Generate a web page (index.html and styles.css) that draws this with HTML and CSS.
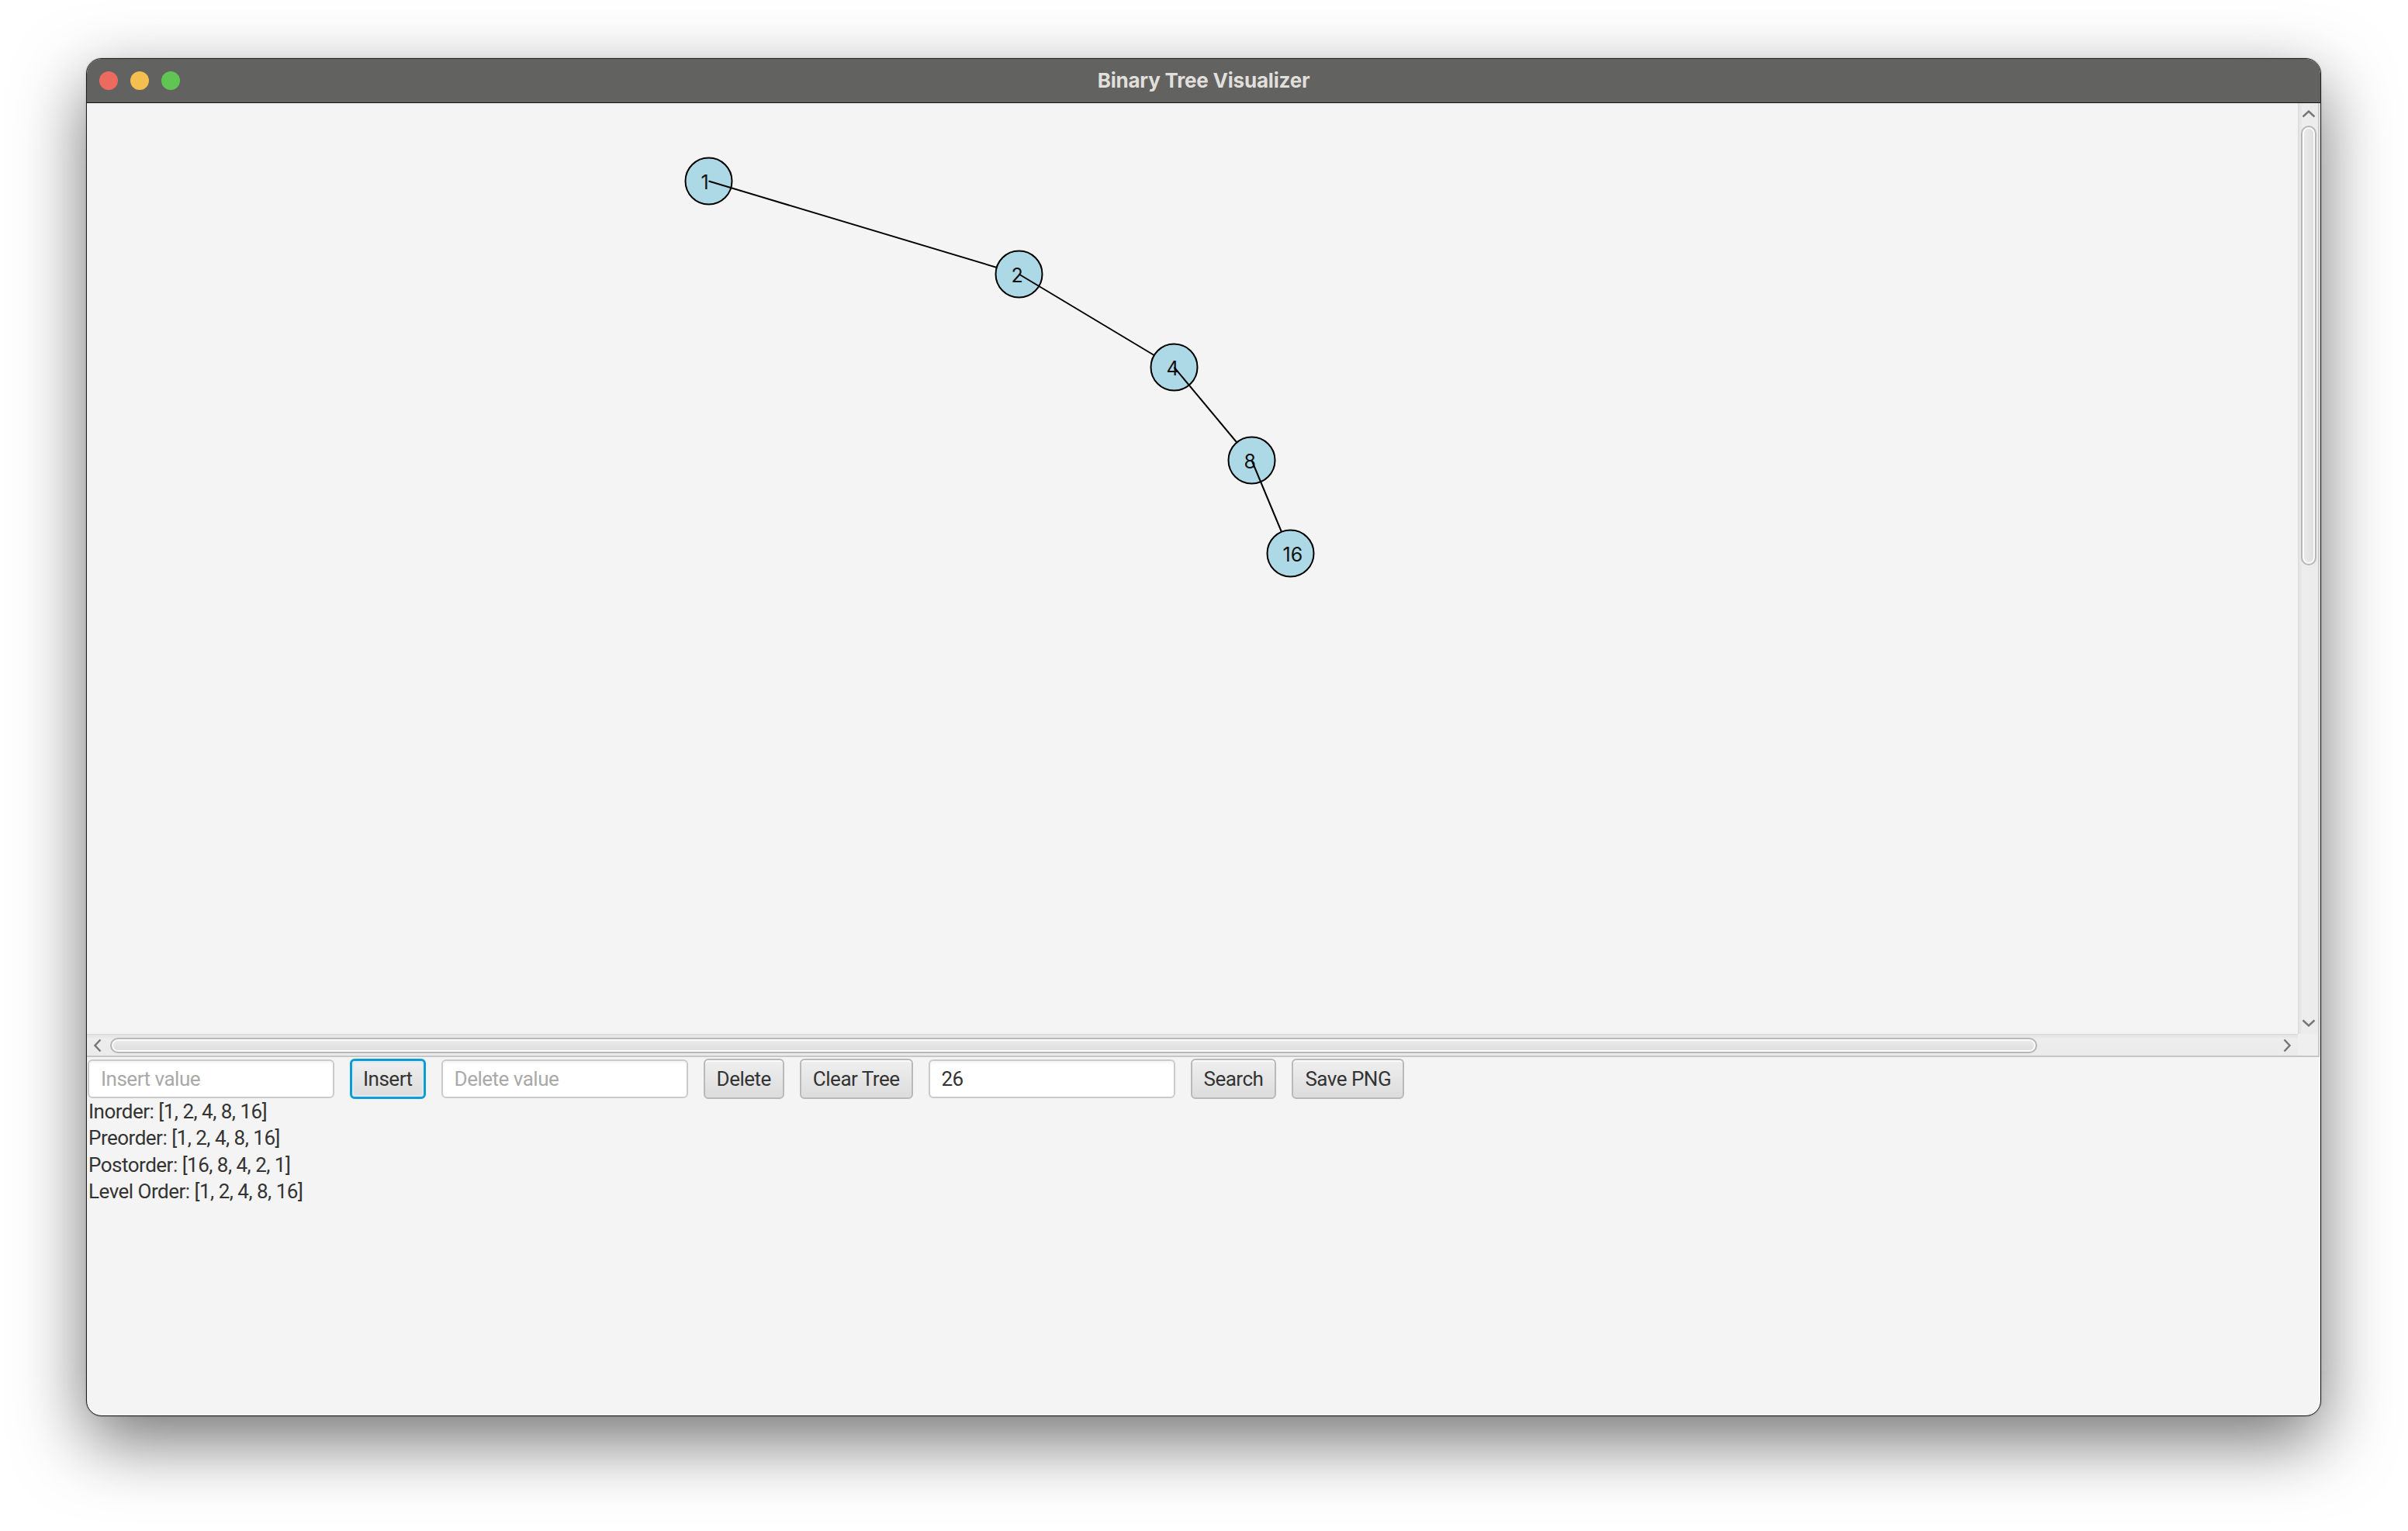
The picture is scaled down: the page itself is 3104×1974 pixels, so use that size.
FILE: index.html
```html
<!DOCTYPE html>
<html>
<head>
<meta charset="utf-8">
<title>Binary Tree Visualizer</title>
<link rel="stylesheet" href="styles.css">
</head>
<body>
<div class="window">
  <div class="titlebar">
    <div class="lights">
      <span class="light red"></span>
      <span class="light yellow"></span>
      <span class="light green"></span>
    </div>
    <div class="title">Binary Tree Visualizer</div>
    <div class="spacer"></div>
  </div>
  <div class="content">
    <div class="scroll-pane">
      <div class="viewport">
        <svg class="tree" width="2850" height="1200" viewBox="0 0 2850 1200">
          <g class="node"><circle cx="801.5" cy="100.5" r="30"/><text x="791.5" y="110.5">1</text></g>
          <line x1="801.5" y1="100.5" x2="1201.5" y2="220.5"/>
          <g class="node"><circle cx="1201.5" cy="220.5" r="30"/><text x="1191.5" y="230.5">2</text></g>
          <line x1="1201.5" y1="220.5" x2="1401.5" y2="340.5"/>
          <g class="node"><circle cx="1401.5" cy="340.5" r="30"/><text x="1391.5" y="350.5">4</text></g>
          <line x1="1401.5" y1="340.5" x2="1501.5" y2="460.5"/>
          <g class="node"><circle cx="1501.5" cy="460.5" r="30"/><text x="1491.5" y="470.5">8</text></g>
          <line x1="1501.5" y1="460.5" x2="1551.5" y2="580.5"/>
          <g class="node"><circle cx="1551.5" cy="580.5" r="30"/><text x="1541.5" y="590.5">16</text></g>
        </svg>
      </div>
      <div class="vbar">
        <div class="arrow-btn v">
          <svg width="18" height="10" viewBox="0 0 18 10"><polyline points="1.5,8.5 9,1.5 16.5,8.5"/></svg>
        </div>
        <div class="thumb vthumb"></div>
        <div class="track-fill"></div>
        <div class="arrow-btn v">
          <svg width="18" height="10" viewBox="0 0 18 10"><polyline points="1.5,1.5 9,8.5 16.5,1.5"/></svg>
        </div>
      </div>
      <div class="hbar">
        <div class="arrow-btn h">
          <svg width="10" height="18" viewBox="0 0 10 18"><polyline points="8.5,1.5 1.5,9 8.5,16.5"/></svg>
        </div>
        <div class="thumb hthumb"></div>
        <div class="track-fill"></div>
        <div class="arrow-btn h">
          <svg width="10" height="18" viewBox="0 0 10 18"><polyline points="1.5,1.5 8.5,9 1.5,16.5"/></svg>
        </div>
      </div>
      <div class="corner"></div>
    </div>
    <div class="controls">
      <div class="field placeholder">Insert value</div>
      <div class="btn focused">Insert</div>
      <div class="field placeholder">Delete value</div>
      <div class="btn">Delete</div>
      <div class="btn">Clear Tree</div>
      <div class="field">26</div>
      <div class="btn">Search</div>
      <div class="btn">Save PNG</div>
    </div>
    <div class="output">
      <div class="line">Inorder: [1, 2, 4, 8, 16]</div>
      <div class="line">Preorder: [1, 2, 4, 8, 16]</div>
      <div class="line">Postorder: [16, 8, 4, 2, 1]</div>
      <div class="line">Level Order: [1, 2, 4, 8, 16]</div>
    </div>
  </div>
</div>
</body>
</html>
```
FILE: styles.css
```css
* { box-sizing: border-box; }

html, body {
  margin: 0;
  background: #ffffff;
}

body {
  width: 3104px;
  height: 1974px;
  padding: 75px 0 0 111px;
  overflow: hidden;
  font-family: Roboto, "Liberation Sans", sans-serif;
}

.window {
  width: 2881px;
  height: 1751px;
  border: 1px solid #1e1e1e;
  border-radius: 20px;
  overflow: hidden;
  display: flex;
  flex-direction: column;
  background: #f4f4f4;
  box-shadow: 0 32px 90px rgba(0, 0, 0, 0.55), 0 0 2px rgba(0, 0, 0, 0.35);
}

.titlebar {
  height: 57px;
  flex: none;
  background: #626261;
  border-bottom: 1px solid #141414;
  display: grid;
  grid-template-columns: 1fr auto 1fr;
  align-items: center;
}

.lights {
  display: flex;
  gap: 16px;
  padding-left: 16px;
}

.light {
  width: 24px;
  height: 24px;
  border-radius: 50%;
}
.light.red { background: #ed6a5e; }
.light.yellow { background: #f5bf4f; }
.light.green { background: #61c554; }

.title {
  font-family: Inter, "Liberation Sans", sans-serif;
  font-weight: 700;
  font-size: 26px;
  color: #e0dfdc;
  letter-spacing: -0.2px;
  padding-bottom: 2px;
}

.content {
  flex: 1;
  display: flex;
  flex-direction: column;
}

.scroll-pane {
  height: 1230px;
  flex: none;
  display: grid;
  grid-template-columns: 1fr 26px;
  grid-template-rows: 1200px 28px;
  border-right: 2px solid #cbcbcb;
  border-bottom: 2px solid #c6c6c6;
  margin-right: 1px;
}

.viewport {
  overflow: hidden;
  background: #f4f4f4;
}

.tree { display: block; }
.tree line { stroke: #000; stroke-width: 2; }
.tree circle { fill: #add8e6; stroke: #000; stroke-width: 2; }
.tree text {
  font-family: Inter, "Liberation Sans", sans-serif;
  font-size: 25px;
  fill: #111;
}

.vbar {
  display: flex;
  flex-direction: column;
  align-items: center;
  background: linear-gradient(to right, #e2e2e2, #ededed 20%, #ebebeb);
  border-left: 1px solid #dadada;
}

.hbar {
  display: flex;
  align-items: center;
  background: linear-gradient(to bottom, #e2e2e2, #ededed 20%, #ebebeb);
  border-top: 1px solid #dadada;
}

.corner { background: #efefef; }

.arrow-btn {
  display: flex;
  align-items: center;
  justify-content: center;
  flex: none;
}
.arrow-btn.v { width: 26px; height: 28px; }
.arrow-btn.h { width: 28px; height: 26px; }
.arrow-btn svg polyline {
  fill: none;
  stroke: #767676;
  stroke-width: 2.4;
}

.track-fill { flex: 1; }

.thumb {
  flex: none;
  border: 2px solid #b7b7b7;
  border-radius: 10px;
  box-shadow: inset 0 0 0 2px #fbfbfb;
}
.vthumb {
  width: 20px;
  height: 567px;
  margin-top: 1px;
  background: linear-gradient(to right, #ebebeb, #dedede);
}
.hthumb {
  height: 20px;
  width: 2484px;
  margin-left: 2px;
  background: linear-gradient(to bottom, #ebebeb, #dedede);
}

.controls {
  display: flex;
  align-items: center;
  gap: 20px;
  padding: 2px 0 0 1px;
  height: 53px;
  letter-spacing: -0.5px;
}

.field {
  width: 318px;
  height: 50px;
  border: 2px solid #cacaca;
  border-radius: 6px;
  background: #ffffff;
  box-shadow: inset 0 3px 3px rgba(0, 0, 0, 0.04);
  padding-left: 15px;
  display: flex;
  align-items: center;
  font-size: 26px;
  color: #333333;
}
.field.placeholder { color: #a9a9a9; }

.btn {
  height: 52px;
  padding: 0 15px;
  border: 2px solid #b9b9b9;
  border-radius: 6px;
  background: linear-gradient(to bottom, #efefef, #dcdcdc);
  box-shadow: inset 0 2px 0 rgba(255, 255, 255, 0.7);
  display: flex;
  align-items: center;
  font-size: 26px;
  color: #333333;
  white-space: nowrap;
}
.btn.focused {
  border: 3px solid #119bd3;
  box-shadow: inset 0 0 0 2px #d8ecf5;
  padding: 0 14px;
}

.output {
  padding-left: 2px;
  color: #333333;
  font-size: 26px;
  line-height: 34.4px;
  letter-spacing: -0.5px;
}

.line { white-space: nowrap; }
```
